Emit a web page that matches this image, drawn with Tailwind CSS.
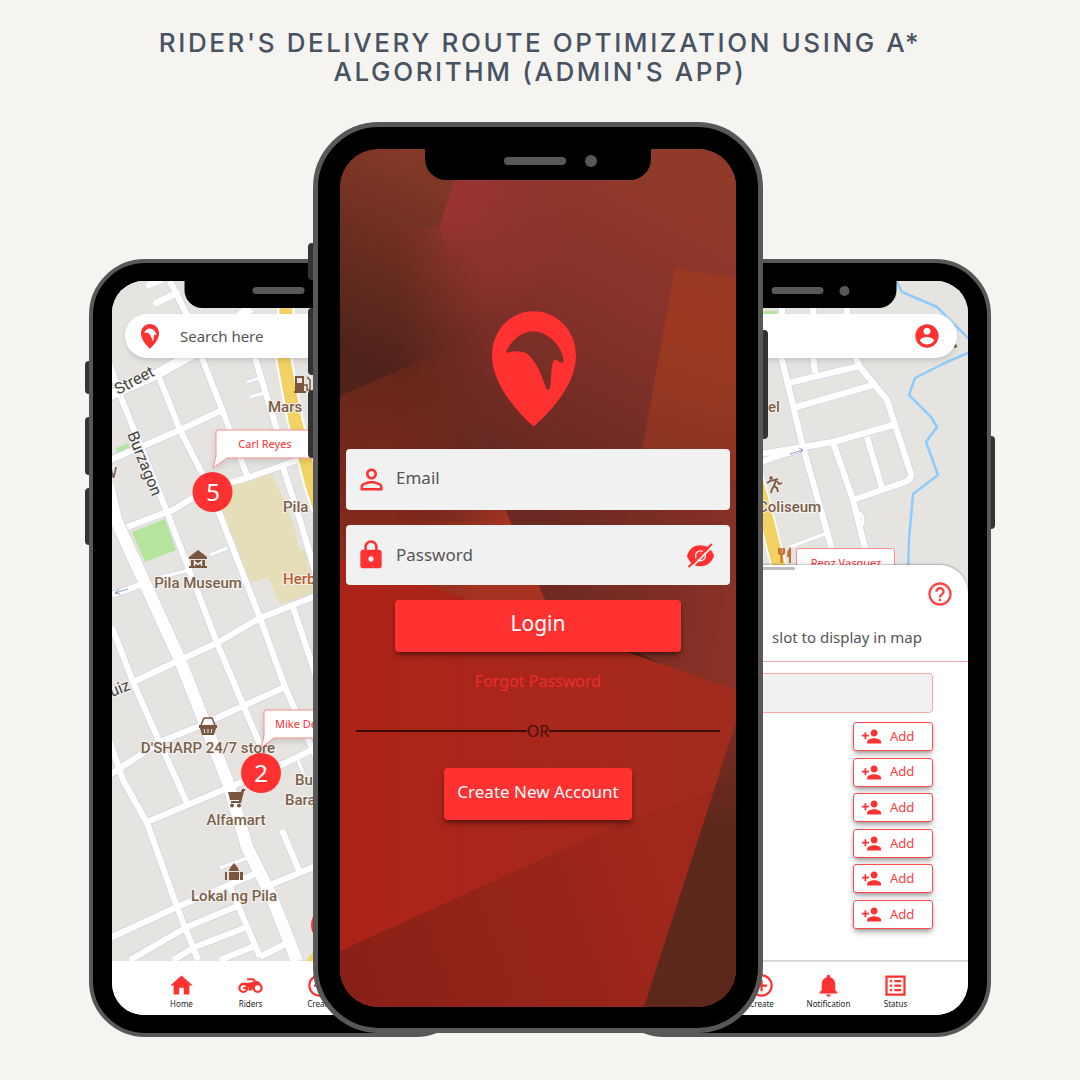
<!DOCTYPE html>
<html lang="en">
<head>
<meta charset="utf-8">
<meta name="viewport" content="width=device-width, initial-scale=1">
<title>Rider's Delivery Route Optimization</title>
<script src="https://cdn.jsdelivr.net/npm/@tailwindcss/browser@4"></script>
</head>
<body class="min-h-screen overflow-x-hidden bg-[#f5f4f0] font-['Noto_Sans',sans-serif] text-[#444]">

<!-- Shared icon set -->
<svg class="hidden" aria-hidden="true">
  <symbol id="pin" viewBox="0 0 254 350"><path fill-rule="evenodd" d="M126 0C56 0 0 58 0 134C0 210 60 290 126 349C194 290 254 210 254 134C254 58 196 0 126 0ZM41 126C60 85 90 62 126 61C172 63 215 110 217 152Q214 159 206 155Q195 144 188 147C178 156 180 200 176 228Q172 244 165 236C152 200 140 165 120 143C103 119 78 118 41 126Z"/></symbol>
  <symbol id="home" viewBox="0 0 24 24"><path d="M10 20v-6h4v6h5v-8h3L12 3 2 12h3v8z"/></symbol>
  <symbol id="bike" viewBox="0 0 24 24"><g fill="none" stroke="currentColor"><circle cx="5.6" cy="14.2" r="3.5" stroke-width="2"/><circle cx="18.4" cy="14.2" r="3.5" stroke-width="2"/><path stroke-width="1.800" d="M5.500 14.200h4M9 6.500h5.500l4 5"/></g><path d="M3 10.500Q6 8.500 9 10l6-1.500 3.500-.5 3 2-5 1.500-3.500 5H10l.5-2.500-2.500-2.500z"/></symbol>
  <symbol id="plus" viewBox="0 0 24 24"><path d="M13 7h-2v4H7v2h4v4h2v-4h4v-2h-4V7zm-1-5C6.480 2 2 6.480 2 12s4.480 10 10 10 10-4.480 10-10S17.520 2 12 2zm0 18c-4.410 0-8-3.590-8-8s3.590-8 8-8 8 3.590 8 8-3.590 8-8 8z"/></symbol>
  <symbol id="bell" viewBox="0 0 24 24"><path d="M12 22c1.100 0 2-.9 2-2h-4c0 1.100.890 2 2 2zm6-6v-5c0-3.070-1.640-5.640-4.500-6.320V4c0-.830-.670-1.500-1.500-1.500s-1.500.670-1.500 1.500v.680C7.630 5.360 6 7.920 6 11v5l-2 2v1h16v-1l-2-2z"/></symbol>
  <symbol id="list" viewBox="0 0 24 24"><path d="M19 5v14H5V5h14m2-2H3v18h18V3zM11 7h6v2h-6V7zm0 4h6v2h-6v-2zm0 4h6v2h-6zM7 7h2v2H7zm0 4h2v2H7zm0 4h2v2H7z"/></symbol>
  <symbol id="account" viewBox="0 0 24 24"><path d="M12 2C6.480 2 2 6.480 2 12s4.480 10 10 10 10-4.480 10-10S17.520 2 12 2zm0 3c1.660 0 3 1.340 3 3s-1.340 3-3 3-3-1.340-3-3 1.340-3 3-3zm0 14.200c-2.500 0-4.710-1.280-6-3.220.030-1.990 4-3.080 6-3.080 1.990 0 5.970 1.090 6 3.080-1.290 1.940-3.500 3.220-6 3.220z"/></symbol>
  <symbol id="help" viewBox="0 0 24 24"><path d="M11 18h2v-2h-2v2zm1-16C6.480 2 2 6.480 2 12s4.480 10 10 10 10-4.480 10-10S17.520 2 12 2zm0 18c-4.410 0-8-3.590-8-8s3.590-8 8-8 8 3.590 8 8-3.590 8-8 8zm0-14c-2.210 0-4 1.790-4 4h2c0-1.100.9-2 2-2s2 .9 2 2c0 2-3 1.750-3 5h2c0-2.250 3-2.500 3-5 0-2.210-1.790-4-4-4z"/></symbol>
  <symbol id="adduser" viewBox="0 0 24 24"><path d="M15 12c2.210 0 4-1.790 4-4s-1.790-4-4-4-4 1.790-4 4 1.790 4 4 4zm-9-2V7H4v3H1v2h3v3h2v-3h3v-2H6zm9 4c-2.670 0-8 1.340-8 4v2h16v-2c0-2.660-5.330-4-8-4z"/></symbol>
  <symbol id="person" viewBox="0 0 24 24"><path d="M12 5.900c1.160 0 2.100.940 2.100 2.100s-.940 2.100-2.100 2.100S9.900 9.160 9.900 8s.940-2.100 2.100-2.100m0 9c2.970 0 6.100 1.460 6.100 2.100v1.100H5.900V17c0-.640 3.130-2.100 6.100-2.100M12 4C9.790 4 8 5.790 8 8s1.790 4 4 4 4-1.790 4-4-1.790-4-4-4zm0 9c-2.670 0-8 1.340-8 4v3h16v-3c0-2.660-5.330-4-8-4z"/></symbol>
  <symbol id="lock" viewBox="0 0 24 24"><path d="M18 8h-1V6c0-2.760-2.240-5-5-5S7 3.240 7 6v2H6c-1.100 0-2 .9-2 2v10c0 1.100.9 2 2 2h12c1.100 0 2-.9 2-2V10c0-1.100-.9-2-2-2zm-6 9c-1.100 0-2-.9-2-2s.9-2 2-2 2 .9 2 2-.9 2-2 2zm3.100-9H8.900V6c0-1.710 1.390-3.100 3.100-3.100 1.710 0 3.100 1.390 3.100 3.100v2z"/></symbol>
  <symbol id="eyeoff" viewBox="0 0 82 74"><path d="M0 38C7 15 22 6 40 6S75 15 82 38C75 61 58 70 40 70S7 61 0 38Z"/><circle cx="41" cy="38" r="15" fill="none" stroke="#f1f1f1" stroke-width="4"/><path d="M40 31a7 7 0 0 1 8 8" fill="none" stroke="#f1f1f1" stroke-width="3"/><path d="M11 76L81 6" stroke="#f1f1f1" stroke-width="5"/><path d="M5 72L75 2" stroke="currentColor" stroke-width="6"/></symbol>
</svg>

<header class="px-4 pt-7">
  <h1 class="mx-auto max-w-[800px] text-center font-['Inter',sans-serif] text-[26px] leading-[29px] font-medium tracking-widest text-[#475362]">RIDER'S DELIVERY ROUTE OPTIMIZATION USING A* ALGORITHM (ADMIN'S APP)</h1>
</header>

<main class="mt-9 flex items-end justify-center pb-10">

  <!-- Left phone: map of riders -->
  <section aria-label="Rider map" class="relative w-[383px] shrink-0">
    <span class="absolute top-[102px] -left-1 h-[33px] w-2 rounded-sm bg-[#333]"></span>
    <span class="absolute top-[158px] -left-1 h-[58px] w-2 rounded-sm bg-[#333]"></span>
    <span class="absolute top-[229px] -left-1 h-[57px] w-2 rounded-sm bg-[#333]"></span>
    <div class="relative h-[778px] rounded-[56px] border-4 border-[#585858] bg-black px-[19px] pt-[18px] pb-[18px]">
      <div class="relative flex h-full flex-col overflow-hidden rounded-[32px] bg-white">
        <div class="absolute top-0 left-1/2 z-10 flex h-[27px] w-[193px] -translate-x-1/2 items-center rounded-b-[18px] bg-black pb-2 pl-[68px]">
          <span class="h-[7px] w-[52px] rounded-full bg-[#585858]"></span><span class="ml-4 size-[10px] rounded-full bg-[#585858]"></span>
        </div>
        <svg class="min-h-0 w-full flex-1" viewBox="112 281 337 680" preserveAspectRatio="xMinYMin slice">
          <rect x="112" y="281" width="337" height="680" fill="#e5e4e1"/>
          <path fill="#e5deb8" d="M226 487L272 473 294 525 300 551 313 545V593L280 605 268 577 250 583 220 512Z"/>
          <path fill="#b5e59c" d="M132 532L165 519 176 550 145 562ZM116 448L128 443 130 448 117 453Z"/>
          <g fill="none" stroke-linejoin="round">
            <g stroke="#d8d8e8">
              <path stroke-width="8" d="M170 281L187 315 202 358 223 412 248 478M108 360L122 400 167 512 217 643 261 747M157 372L180 430 207 483 220 515 260 618 285 687 316 757M110 460L180 430 222 410M127 527L173 510 207 489 250 477 312 455M112 627L133 682 160 743 187 803M133 682L180 660 217 643 260 618 316 596M108 776L160 742 197 727 243 706 285 687M110 742L123 780 147 823 177 907 198 960M147 822L223 790 277 767 316 748M108 939L177 907 257 873M270 885L316 866M130 960L187 927 240 905M173 960L195 947 247 927M220 960L257 945M260 957L287 943M230 887L240 910 260 957M282 830L300 873M293 607L316 676M255 358L277 430M283 467L300 520 316 575M112 595L140 585"/>
              <path stroke-width="14" d="M108 485L116 520 180 660 227 780 247 847 270 893 297 961"/>
              <path stroke-width="12" d="M104 398L157 374 200 350 250 308"/>
              <path stroke-width="5" d="M247 382L260 378M250 397L264 393M157 578L190 570M210 555L227 548M220 868L247 858M298 760L304 775"/>
            </g>
            <g stroke="#fff">
              <path stroke-width="6" d="M170 281L187 315 202 358 223 412 248 478M108 360L122 400 167 512 217 643 261 747M157 372L180 430 207 483 220 515 260 618 285 687 316 757M110 460L180 430 222 410M127 527L173 510 207 489 250 477 312 455M112 627L133 682 160 743 187 803M133 682L180 660 217 643 260 618 316 596M108 776L160 742 197 727 243 706 285 687M110 742L123 780 147 823 177 907 198 960M147 822L223 790 277 767 316 748M108 939L177 907 257 873M270 885L316 866M130 960L187 927 240 905M173 960L195 947 247 927M220 960L257 945M260 957L287 943M230 887L240 910 260 957M282 830L300 873M293 607L316 676M255 358L277 430M283 467L300 520 316 575M112 595L140 585"/>
              <path stroke-width="12" d="M108 485L116 520 180 660 227 780 247 847 270 893 297 961"/>
              <path stroke-width="10" d="M104 398L157 374 200 350 250 308"/>
              <path stroke-width="3" d="M247 382L260 378M250 397L264 393M157 578L190 570M210 555L227 548M220 868L247 858M298 760L304 775"/>
              <path stroke-width="6" stroke-linecap="round" d="M156 303L177 293M149 285L160 280"/>
              <path stroke-width="17" d="M286 281V308L284 360 295 420 312 485 320 510"/>
            </g>
            <path stroke="#f2d264" stroke-width="13" d="M286 281V308L284 360 295 420 312 485 320 510"/>
            <path stroke="#8f9ccd" d="M128 589L115 593M119 589L115 593 120 594"/>
          </g>
          <path fill="#f2d264" d="M306 961L316 948V961Z"/>
          <g fill="#7a5f4c" class="font-['Roboto',sans-serif] text-[15px] font-medium" stroke="#f5f4f0" stroke-width="2" paint-order="stroke" stroke-linejoin="round">
            <text x="268" y="412">Mars</text>
            <text x="283" y="512">Pila</text>
            <text x="283" y="584" fill="#b85a2b">Herb</text>
            <text x="198" y="588" text-anchor="middle">Pila Museum</text>
            <text x="208" y="753" text-anchor="middle">D'SHARP 24/7 store</text>
            <text x="295" y="785">Bu</text>
            <text x="285" y="805">Bara</text>
            <text x="236" y="825" text-anchor="middle">Alfamart</text>
            <text x="234" y="901" text-anchor="middle">Lokal ng Pila</text>
            <text x="104" y="478">W</text>
            <g fill="#454545" class="text-[16px] font-normal">
              <text transform="translate(118 395) rotate(-28)">Street</text>
              <text transform="translate(127 434) rotate(68)">Burzagon</text>
              <text transform="translate(112 697) rotate(-22)">uiz</text>
            </g>
          </g>
          <g fill="#7a563e">
            <path d="M189 557L198 550 207 557V559H189ZM191 560H205V566H207V568H189V566H191Z"/>
            <path fill="none" stroke="#eee" stroke-width="1.500" d="M194.500 566V561.500L198 564.500 201.500 561.500V566"/>
            <path d="M199 725H217V728H216L214 735H202L200 728H199Z"/><path fill="none" stroke="#7a563e" stroke-width="1.500" d="M201 725L204 718H212L215 725"/><path stroke="#eee" d="M204 729L205 733M208 729V733M212 729L211 733"/>
            <path d="M228 792H241L242 789H245V791H244L241 803H231V801H239V800H230Z"/><circle cx="232" cy="805.500" r="2"/><circle cx="239" cy="805.500" r="2"/>
            <path d="M225 872H227V880H225ZM240 872H243V880H240ZM229 872H239V880H229ZM230 868L234 863 238 868 239 871H229Z"/>
            <path fill-rule="evenodd" d="M295 376H304V391H306V393H294V391H295ZM297 378V383H302V378Z"/><path fill="none" stroke="#7a563e" stroke-width="1.500" d="M304 385H307V390H310V380L307 377"/>
          </g>
          <!-- Rider callouts -->
          <g fill="#fff" stroke="#ff8a8a" class="drop-shadow-md">
            <path d="M218 430H312Q314 430 314 432V456Q314 458 312 458H227L213 468 216 456V432Q216 430 218 430Z"/>
            <path d="M266 710H360Q362 710 362 712V736Q362 738 360 738H274L261 748 264 736V712Q264 710 266 710Z"/>
          </g>
          <g fill="#ff3131" class="text-[11px]">
            <text x="265" y="448" text-anchor="middle">Carl Reyes</text>
            <text x="275" y="728">Mike De</text>
            <circle cx="212.500" cy="492" r="20"/><circle cx="261" cy="773" r="20"/><circle cx="330" cy="925" r="19"/>
          </g>
          <g fill="#fff" text-anchor="middle" class="text-[24px]"><text x="213" y="501">5</text><text x="261" y="782">2</text></g>
        </svg>
        <label class="absolute top-[33px] left-[13px] flex h-11 w-[311px] items-center rounded-full bg-white pl-4 shadow-md">
          <svg class="h-[25px] w-[18px] fill-[#ff3131]"><use href="#pin"/></svg>
          <input type="search" aria-label="Search" placeholder="Search here" class="ml-[21px] w-40 bg-transparent text-[15px] outline-none placeholder:text-[#555]">
        </label>
        <nav class="flex h-[54px] bg-white pt-[11px] pl-[35px] text-[8px] leading-[10px] text-[#222]">
          <a href="#" class="flex w-[69px] shrink-0 flex-col items-center"><svg class="size-[27px] fill-[#ff3131]"><use href="#home"/></svg>Home</a>
          <a href="#" class="flex w-[69px] shrink-0 flex-col items-center"><svg class="size-[27px] fill-[#ff3131] text-[#ff3131]"><use href="#bike"/></svg>Riders</a>
          <a href="#" class="flex w-[69px] shrink-0 flex-col items-center"><svg class="size-[27px] fill-[#ff3131]"><use href="#plus"/></svg>Create</a>
        </nav>
      </div>
    </div>
  </section>

  <!-- Centre phone: login -->
  <section aria-label="Login" class="relative z-20 mb-1 -ml-[159px] w-[450px] shrink-0">
    <span class="absolute top-[121px] -left-[5px] h-[37px] w-2 rounded-sm bg-[#333]"></span>
    <span class="absolute top-[186px] -left-[5px] h-[67px] w-2 rounded-sm bg-[#333]"></span>
    <span class="absolute top-[268px] -left-[5px] h-[68px] w-2 rounded-sm bg-[#333]"></span>
    <span class="absolute top-[208px] -right-[5px] h-[109px] w-2 rounded-sm bg-[#333]"></span>
    <div class="relative h-[911px] rounded-[66px] border-[5px] border-[#585858] bg-black px-[22px] pt-[22px] pb-[21px]">
      <div class="relative h-full overflow-hidden rounded-[38px]">
        <svg class="absolute inset-0 size-full" viewBox="340 149 396 858" preserveAspectRatio="none" aria-hidden="true">
          <defs>
            <linearGradient id="g1" gradientUnits="userSpaceOnUse" x1="440" y1="150" x2="350" y2="350"><stop stop-color="#883a28"/><stop offset="1" stop-color="#50231a"/></linearGradient>
            <linearGradient id="g2" gradientUnits="userSpaceOnUse" x1="620" y1="190" x2="480" y2="450"><stop stop-color="#91382b"/><stop offset=".5" stop-color="#7f3029"/><stop offset="1" stop-color="#652921"/></linearGradient>
            <radialGradient id="g2b" gradientUnits="userSpaceOnUse" cx="450" cy="200" r="130"><stop stop-color="#9a3433"/><stop offset="1" stop-color="#9a3433" stop-opacity="0"/></radialGradient>
            <linearGradient id="g3" gradientUnits="userSpaceOnUse" x1="380" y1="370" x2="390" y2="600"><stop stop-color="#65271a"/><stop offset=".6" stop-color="#80291a"/><stop offset="1" stop-color="#963020"/></linearGradient>
            <linearGradient id="g4" gradientUnits="userSpaceOnUse" x1="395" y1="0" x2="485" y2="0"><stop stop-color="#fff" stop-opacity="0"/><stop offset="1" stop-color="#fff"/></linearGradient>
            <linearGradient id="g5" gradientUnits="userSpaceOnUse" x1="540" y1="560" x2="736" y2="600"><stop stop-color="#6b2923"/><stop offset="1" stop-color="#893126"/></linearGradient>
            <linearGradient id="g6" gradientUnits="userSpaceOnUse" x1="340" y1="0" x2="736" y2="0"><stop stop-color="#ac2317"/><stop offset=".6" stop-color="#a8271b"/><stop offset="1" stop-color="#a02c1e"/></linearGradient>
            <linearGradient id="g7" gradientUnits="userSpaceOnUse" x1="340" y1="980" x2="680" y2="860"><stop stop-color="#892017"/><stop offset="1" stop-color="#a0271b"/></linearGradient>
            <linearGradient id="g8" gradientUnits="userSpaceOnUse" x1="400" y1="520" x2="560" y2="580"><stop stop-color="#80291c" stop-opacity="0"/><stop offset=".6" stop-color="#a73422"/></linearGradient>
            <linearGradient id="g9" gradientUnits="userSpaceOnUse" x1="0" y1="720" x2="0" y2="830"><stop stop-color="#7a2c24"/><stop offset="1" stop-color="#5d281c"/></linearGradient>
            <linearGradient id="g10" gradientUnits="userSpaceOnUse" x1="730" y1="270" x2="680" y2="450"><stop stop-color="#993824"/><stop offset=".4" stop-color="#9c3a21"/><stop offset="1" stop-color="#8e3424"/></linearGradient>
            <linearGradient id="g11" gradientUnits="userSpaceOnUse" x1="640" y1="240" x2="655" y2="190"><stop stop-color="#853626"/><stop offset="1" stop-color="#903b29"/></linearGradient>
            <linearGradient id="g12" gradientUnits="userSpaceOnUse" x1="0" y1="226" x2="0" y2="262"><stop stop-color="#fff"/><stop offset="1" stop-color="#fff" stop-opacity="0"/></linearGradient>
            <mask id="fade" maskUnits="userSpaceOnUse" x="340" y="149" width="396" height="400">
              <path fill="#fff" d="M465 149H736V227H439Z"/>
              <rect x="390" y="227" width="346" height="300" fill="url(#g4)"/>
              <path fill="url(#g12)" d="M439 226H500V262H450Z"/>
            </mask>
          </defs>
          <rect x="340" y="149" width="396" height="858" fill="url(#g1)"/>
          <path fill="url(#g3)" d="M340 396L430 357 520 340V700H340Z"/>
          <g mask="url(#fade)">
            <rect x="340" y="149" width="396" height="372" fill="url(#g2)"/>
            <rect x="340" y="149" width="396" height="372" fill="url(#g2b)"/>
          </g>
          <path fill="url(#g11)" d="M565 149H736V227L620 184Z"/>
          <path fill="url(#g10)" d="M675 268L736 278V520H630L642 450Z"/>
          <path fill="url(#g8)" d="M340 480H492L550 610 500 640 340 600Z"/>
          <path fill="url(#g5)" d="M492 480H736V700L550 610Z"/>
          <path fill="url(#g6)" d="M340 559L425 584 480 604 633 654 736 690V1007H340Z"/>
          <path fill="url(#g7)" d="M340 951L628 820 715 790 700 1007H340Z"/>
          <path fill="url(#g9)" d="M736 722L644 1007H736Z"/>
        </svg>
        <div class="absolute top-0 left-1/2 z-10 flex h-[31px] w-[226px] -translate-x-1/2 items-center rounded-b-[21px] bg-black pb-2 pl-[79px]">
          <span class="h-2 w-[62px] rounded-full bg-[#585858]"></span><span class="ml-[19px] size-3 rounded-full bg-[#585858]"></span>
        </div>
        <form class="relative flex flex-col items-center px-[6px] pt-[162px]">
          <svg class="mr-2 h-[116px] w-[84px] fill-[#ff3131]" role="img" aria-label="Logo"><use href="#pin"/></svg>
          <label class="mt-[22px] flex h-[61px] w-full items-center rounded bg-[#f1f1f1] pl-[9px]">
            <svg class="size-[33px] fill-[#ff3131]"><use href="#person"/></svg>
            <input type="email" aria-label="Email" placeholder="Email" class="ml-2 flex-1 bg-transparent pb-1 text-[17px] outline-none placeholder:text-[#555]">
          </label>
          <div class="mt-[15px] flex h-[60px] w-full items-center rounded bg-[#f1f1f1] pr-4 pl-[9px]">
            <svg class="size-8 fill-[#ff3131]"><use href="#lock"/></svg>
            <input type="password" aria-label="Password" placeholder="Password" class="ml-[9px] flex-1 bg-transparent text-[17px] outline-none placeholder:text-[#555]">
            <button type="button" aria-label="Show password"><svg class="h-[25px] w-[27px] fill-[#ff3131] text-[#ff3131]"><use href="#eyeoff"/></svg></button>
          </div>
          <button type="submit" class="mt-[15px] h-[52px] w-[286px] rounded bg-[#ff3131] pb-1 text-[21px] text-white shadow-md shadow-black/40">Login</button>
          <a href="#" class="mt-[17px] text-[16px] leading-6 text-[#ee2c2e]">Forgot Password</a>
          <div class="mt-[26px] flex w-full items-center px-[10px] text-[16px] leading-6 text-[#4a0f0a]">
            <span class="h-[2px] flex-1 bg-[#3f0d09]"></span>OR<span class="h-[2px] flex-1 bg-[#3f0d09]"></span>
          </div>
          <button type="button" class="mt-[25px] h-[52px] w-[188px] rounded bg-[#ff3131] pb-1 text-[17px] text-white shadow-md shadow-black/40">Create New Account</button>
        </form>
      </div>
    </div>
  </section>

  <!-- Right phone: rider slots -->
  <section aria-label="Rider slots" class="relative -ml-[155px] w-[383px] shrink-0">
    <span class="absolute top-[177px] -right-1 h-[93px] w-2 rounded-sm bg-[#333]"></span>
    <div class="relative h-[778px] rounded-[56px] border-4 border-[#585858] bg-black px-[19px] pt-[18px] pb-[18px]">
      <div class="relative flex h-full flex-col overflow-hidden rounded-[32px] bg-[#e5e4e1]">
        <div class="absolute top-0 left-1/2 z-10 flex h-[27px] w-[193px] -translate-x-1/2 items-center rounded-b-[18px] bg-black pb-2 pl-[68px]">
          <span class="h-[7px] w-[52px] rounded-full bg-[#585858]"></span><span class="ml-4 size-[10px] rounded-full bg-[#585858]"></span>
        </div>
        <svg class="h-[310px] w-full shrink-0" viewBox="631 281 337 310" preserveAspectRatio="xMaxYMin slice">
          <rect x="631" y="281" width="337" height="310" fill="#e5e4e1"/>
          <path fill="#b5e59c" d="M755 311H777V316H755Z"/>
          <g fill="none" stroke-linejoin="round">
            <path stroke="#d8d8e8" stroke-width="8" d="M782 300V360L803 447 835 560M813 300V355L815 373M846 300L850 345 860 367 887 400 911 474Q912 479 905 482L853 500M788 383L860 366M793 408L873 385M755 455L803 447 833 442 893 425M755 464L803 448M833 442L853 500 868 560M867 437L882 488"/>
            <path stroke="#d8d8e8" stroke-width="5" d="M790 547L827 533M857 512Q864 514 863 522 862 528 858 528"/>
            <path stroke="#fff" stroke-width="6" d="M782 300V360L803 447 835 560M813 300V355L815 373M846 300L850 345 860 367 887 400 911 474Q912 479 905 482L853 500M788 383L860 366M793 408L873 385M755 455L803 447 833 442 893 425M755 464L803 448M833 442L853 500 868 560M867 437L882 488"/>
            <path stroke="#fff" stroke-width="3" d="M790 547L827 533M857 512Q864 514 863 522 862 528 858 528"/>
            <path stroke="#fff" stroke-width="16" d="M748 450L762 500 781 575"/>
            <path stroke="#f2d264" stroke-width="13" d="M748 450L762 500 781 575"/>
            <path stroke="#8ecbfa" stroke-width="2.500" d="M896 281L902 292 937 307 970 340M970 352L947 362 915 378 909 395 931 417 937 427 926 442 938 475 913 494 909 540 908 575"/>
            <path stroke="#8f9ccd" d="M790 454L803 450M799 448L803 450 800 453"/>
          </g>
          <g fill="#7a5f4c" class="font-['Roboto',sans-serif] text-[15px] font-medium" stroke="#f5f4f0" stroke-width="2" paint-order="stroke" stroke-linejoin="round">
            <text x="768" y="412">el</text><text x="758" y="512">Coliseum</text>
          </g>
          <circle cx="955" cy="346" r="2" fill="#7a563e"/>
          <circle cx="771" cy="478" r="1.700" fill="#7a563e"/>
          <path fill="none" stroke="#7a563e" stroke-width="1.800" d="M767 483L770 481 778 479M776 480L774 486 777 488 778 492M777 481L779 484 782 483M774 486L772 489 771 493"/>
          <path fill="none" stroke="#c96a2b" stroke-width="2" d="M779 548V553Q781 556 784 553V548M781.500 548V563"/><path fill="#c96a2b" d="M791 547V563H789V557H787Q787 549 791 547Z"/>
          <rect x="796.500" y="548.500" width="98" height="32" rx="2" fill="#fff" stroke="#ff8a8a"/>
          <text x="846" y="567" text-anchor="middle" fill="#ff3131" class="text-[11px]">Renz Vasquez</text>
        </svg>
        <div class="absolute top-[33px] right-[11px] flex h-11 w-[311px] items-center justify-end rounded-full bg-white pr-4 shadow-md">
          <button type="button" aria-label="Account"><svg class="size-7 fill-[#ff3131]"><use href="#account"/></svg></button>
        </div>
        <div class="relative -mt-[26px] flex flex-1 flex-col rounded-t-[28px] bg-white shadow-[0_-1px_2px_rgba(0,0,0,0.25)]">
          <span class="mt-[2px] ml-[98px] h-[3px] w-[66px] rounded-full bg-[#bdbdbd]"></span>
          <div class="flex justify-end pt-[10px] pr-[14px]">
            <button type="button" aria-label="Help"><svg class="size-7 fill-[#ff4444]"><use href="#help"/></svg></button>
          </div>
          <p class="mt-[17px] border-b border-[#ffa5a5] pr-[46px] pb-3 text-right text-[15px] leading-6 text-[#555]">slot to display in map</p>
          <div class="flex flex-col items-end pt-[11px] pr-[35px] pl-[35px]">
            <input type="text" aria-label="Slot" class="h-10 w-full rounded-sm border border-[#ffa5a5] bg-[#f1f1f1] outline-none">
            <div class="mt-[9px] flex h-[207px] flex-col justify-between text-[13px] text-[#ff3c3c]">
              <button type="button" class="flex h-[29px] w-20 items-center gap-2 rounded-[3px] border border-[#ff4b4b] bg-white pl-[7px] shadow-md shadow-black/30"><svg class="size-[21px] fill-[#ff3131]"><use href="#adduser"/></svg>Add</button>
              <button type="button" class="flex h-[29px] w-20 items-center gap-2 rounded-[3px] border border-[#ff4b4b] bg-white pl-[7px] shadow-md shadow-black/30"><svg class="size-[21px] fill-[#ff3131]"><use href="#adduser"/></svg>Add</button>
              <button type="button" class="flex h-[29px] w-20 items-center gap-2 rounded-[3px] border border-[#ff4b4b] bg-white pl-[7px] shadow-md shadow-black/30"><svg class="size-[21px] fill-[#ff3131]"><use href="#adduser"/></svg>Add</button>
              <button type="button" class="flex h-[29px] w-20 items-center gap-2 rounded-[3px] border border-[#ff4b4b] bg-white pl-[7px] shadow-md shadow-black/30"><svg class="size-[21px] fill-[#ff3131]"><use href="#adduser"/></svg>Add</button>
              <button type="button" class="flex h-[29px] w-20 items-center gap-2 rounded-[3px] border border-[#ff4b4b] bg-white pl-[7px] shadow-md shadow-black/30"><svg class="size-[21px] fill-[#ff3131]"><use href="#adduser"/></svg>Add</button>
              <button type="button" class="flex h-[29px] w-20 items-center gap-2 rounded-[3px] border border-[#ff4b4b] bg-white pl-[7px] shadow-md shadow-black/30"><svg class="size-[21px] fill-[#ff3131]"><use href="#adduser"/></svg>Add</button>
            </div>
          </div>
        </div>
        <nav class="relative flex h-[55px] justify-end border-t-2 border-[#d9d9d9] bg-white pt-[10px] pr-[39px] text-[8px] leading-[10px] text-[#222]">
          <a href="#" class="flex w-[67px] shrink-0 flex-col items-center"><svg class="size-[27px] fill-[#ff3131]"><use href="#plus"/></svg>Create</a>
          <a href="#" class="flex w-[67px] shrink-0 flex-col items-center"><svg class="size-[27px] fill-[#ff3131]"><use href="#bell"/></svg>Notification</a>
          <a href="#" class="flex w-[67px] shrink-0 flex-col items-center"><svg class="size-[27px] fill-[#ff3131]"><use href="#list"/></svg>Status</a>
        </nav>
      </div>
    </div>
  </section>
</main>
</body>
</html>
